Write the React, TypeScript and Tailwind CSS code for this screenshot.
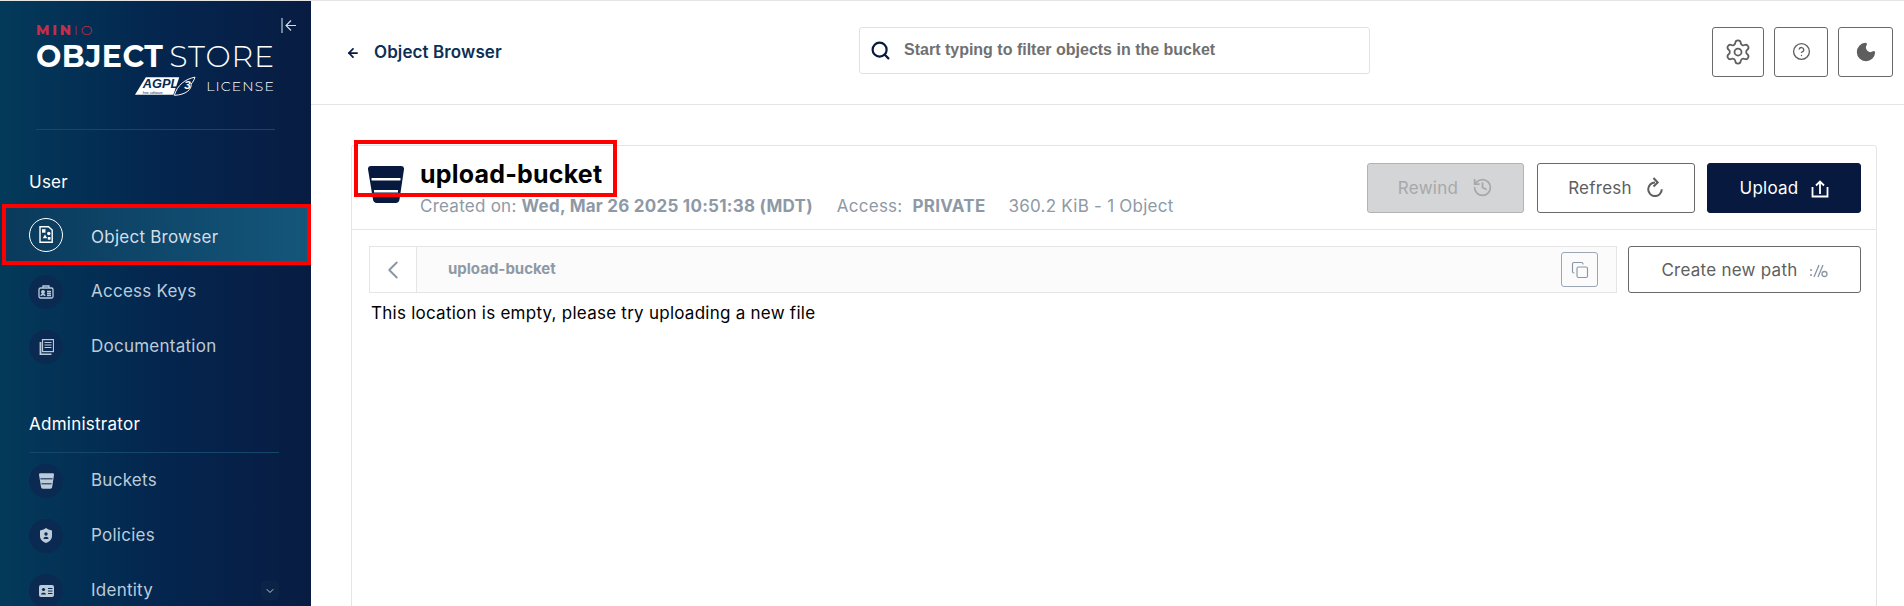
import { ArrowLeft, ChevronDown, ChevronLeft, CircleHelp, Copy, History, Moon, Search, Settings } from "lucide-react";
import type { ReactNode } from "react";

function BucketIcon({ className, line }: { className: string; line: string }) {
  return (
    <svg viewBox="0 0 36 37" className={className}>
      <path d="M3 0h30a3 3 0 0 1 3 3.300L31.500 33.500a4 4 0 0 1-4 3.500H9a4 4 0 0 1-4-3.500L0 3.300A3 3 0 0 1 3 0z" fill="currentColor" />
      <rect x="3.500" y="12" width="29" height="2.500" fill={line} />
      <rect x="6" y="24" width="24" height="2.500" fill={line} />
    </svg>
  );
}

function ObjectIcon() {
  return (
    <svg viewBox="0 0 14 17" className="w-[14px] h-[17px] text-white" fill="none" stroke="currentColor" strokeWidth="1.400">
      <path d="M1 .8h8.500L13.200 4v12.200H1z" />
      <rect x="3" y="3.200" width="3.500" height="3.500" fill="currentColor" stroke="none" />
      <circle cx="9.800" cy="7.500" r="1.700" fill="currentColor" stroke="none" />
      <path d="M6 8.500l2.300 3.800H3.700z" fill="currentColor" stroke="none" />
      <rect x="8.800" y="11" width="2.700" height="2.700" fill="currentColor" stroke="none" />
    </svg>
  );
}

function KeysIcon() {
  return (
    <svg viewBox="0 0 16 14" className="w-4 h-[14px]" fill="none" stroke="currentColor" strokeWidth="1.300">
      <rect x="1" y="3" width="14" height="10" rx="1.500" />
      <path d="M5 3V1h6v2" />
      <circle cx="5" cy="7" r="1.300" fill="currentColor" />
      <path d="M3 11c0-2 4-2 4 0M9 6.500h4M9 8.500h4M9 10.500h4" />
    </svg>
  );
}

function DocsIcon() {
  return (
    <svg viewBox="0 0 15 16" className="w-[15px] h-4" fill="none" stroke="currentColor" strokeWidth="1.200">
      <rect x="3.500" y="0.600" width="11" height="12" />
      <path d="M5.500 3.500h7M5.500 6h7M5.500 8.500h7" />
      <path d="M1.500 3v12.400h11" strokeWidth="1.800" />
    </svg>
  );
}

function PolicyIcon() {
  return (
    <svg viewBox="0 0 12 15" className="w-3 h-[15px]">
      <path d="M6 0l2.500 1.600L12 2.500V8c0 3.500-3 6-6 7-3-1-6-3.500-6-7V2.500l3.500-.9z" fill="currentColor" />
      <circle cx="6" cy="6" r="1.700" fill="#0a2a52" />
      <path d="M3.500 11c0-3 5-3 5 0z" fill="#0a2a52" />
    </svg>
  );
}

function IdentityIcon() {
  return (
    <svg viewBox="0 0 15 12" className="w-[15px] h-3">
      <rect width="15" height="12" rx="2" fill="currentColor" />
      <circle cx="4.500" cy="4.500" r="1.600" fill="#0a2a52" />
      <path d="M2 9.500c0-2.500 5-2.500 5 0z" fill="#0a2a52" />
      <path d="M9 3.500h4.500M9 6h4.500M9 8.500h4.500" stroke="#0a2a52" />
    </svg>
  );
}

function NavItem({ icon, label, active, chevron }: { icon: ReactNode; label: string; active?: boolean; chevron?: boolean }) {
  return (
    <div
      className={
        active
          ? "flex items-center h-[61px] pl-[23px] pr-[32px] ml-[2px] border-[4px] border-[#fe0000] bg-gradient-to-r from-[#0a3a5c] to-[#14567a] text-[#d4dde7]"
          : "flex items-center h-[55px] pl-[29px] pr-[32px] text-[#bccbd9]"
      }
    >
      <div
        className={
          active
            ? "w-[34px] h-[34px] rounded-full border border-white flex items-center justify-center shrink-0"
            : "w-[34px] h-[34px] rounded-full bg-[#0a2a52] flex items-center justify-center shrink-0"
        }
      >
        {icon}
      </div>
      <span className={active ? "ml-[28px] pt-[6px] text-[17px] tracking-[0.25px] flex-1" : "ml-[28px] text-[17px] tracking-[0.25px] flex-1"}>{label}</span>
      {chevron && (
        <div className="w-[18px] h-[19px] rounded-sm bg-[#0a2346] flex items-center justify-center">
          <ChevronDown size={12} />
        </div>
      )}
    </div>
  );
}

function Sidebar() {
  return (
    <aside className="relative w-[311px] shrink-0 h-full overflow-hidden bg-gradient-to-r from-[#033a5a] via-[#04264f] to-[#081c42]">
      <div className="px-[36px] pt-[24px] [font-family:Montserrat,Inter,sans-serif]">
        <div className="text-[#c72c48] text-[14px] leading-[11px] font-extrabold tracking-[0.2em]">
          MIN<span className="font-light">IO</span>
        </div>
        <div className="flex justify-between items-baseline mt-[6px] text-white text-[30px] leading-[30px]">
          <span className="font-bold tracking-[0.015em]">OBJECT</span>
          <span className="font-light tracking-[0.03em]">STORE</span>
        </div>
        <div className="flex justify-end items-center gap-[10px] mt-[4px]">
          <svg viewBox="0 0 62 20" className="w-[61px] h-5">
            <path d="M11 1h34L39 19H0z" fill="#fff" />
            <text x="8" y="12.500" fontSize="13" fontWeight="700" fontStyle="italic" fill="#0a2a52" fontFamily="Liberation Sans, sans-serif">AGPL</text>
            <text x="8" y="17.700" fontSize="3.500" fill="#0a2a52" fontFamily="Liberation Sans, sans-serif">free software</text>
            <path d="M40 19.500C43 9 51 3 61 1c-1 3-2 5-4 7 1 5-5 11-17 11.500z" fill="none" stroke="#fff" strokeWidth="1" />
            <text x="50" y="13.500" fontSize="12" fontWeight="700" fontStyle="italic" fill="#fff" fontFamily="Liberation Sans, sans-serif">3</text>
          </svg>
          <span className="text-[14px] leading-5 font-light tracking-[0.08em] text-white">LICENSE</span>
        </div>
      </div>
      <div className="absolute top-[17px] right-[14px] text-[#d6dee8]">
        <svg viewBox="0 0 16 15" className="w-4 h-[15px]" fill="none" stroke="currentColor" strokeWidth="1.100">
          <path d="M1 0v15" strokeWidth="1.600" stroke="#8fa0b5" />
          <path d="M15 7.500H5M10 2.500l-5 5 5 5" />
        </svg>
      </div>
      <div className="mx-[36px] mt-[33px] border-t border-[#14466e]" />
      <div className="pl-[29px] pt-[43px] pb-[12px] text-[17px] tracking-[0.25px] leading-[19px] text-white">User</div>
      <NavItem active icon={<ObjectIcon />} label="Object Browser" />
      <div className="-mt-[1px]">
        <NavItem icon={<KeysIcon />} label="Access Keys" />
        <NavItem icon={<DocsIcon />} label="Documentation" />
      </div>
      <div className="mt-[41px] ml-[29px] mr-[32px] pb-[18px] border-b border-[#14466e] text-[17px] tracking-[0.25px] leading-[19px] text-white">Administrator</div>
      <NavItem icon={<BucketIcon className="w-[15px] h-4" line="#0a2a52" />} label="Buckets" />
      <NavItem icon={<PolicyIcon />} label="Policies" />
      <NavItem icon={<IdentityIcon />} label="Identity" chevron />
    </aside>
  );
}

function Btn({ children, className }: { children: ReactNode; className: string }) {
  return <div className={`flex items-center justify-center rounded-[3px] border text-[17px] tracking-[0.25px] ${className}`}>{children}</div>;
}

function RefreshIcon() {
  return (
    <svg viewBox="0 0 18 20" className="w-[18px] h-5 -mt-[3px]" fill="none" stroke="currentColor" strokeWidth="2">
      <path d="M9 5.500a6.800 6.800 0 1 0 6.800 6.800" />
      <path d="M7.500 1l4.200 4.500L7.500 9.500" />
    </svg>
  );
}

function UploadIcon() {
  return (
    <svg viewBox="0 0 18 18" className="w-[18px] h-[18px]" fill="none" stroke="currentColor" strokeWidth="1.800">
      <path d="M1.500 7v9.500h15V7M9 14V2M5 5.500L9 1.500l4 4" />
    </svg>
  );
}

function PathIcon() {
  return (
    <svg viewBox="0 0 18 14" className="w-[18px] h-[14px] text-[#8a96a3]" fill="none" stroke="currentColor" strokeWidth="1.300">
      <circle cx="1" cy="6" r="1" fill="currentColor" stroke="none" />
      <circle cx="1" cy="11" r="1" fill="currentColor" stroke="none" />
      <path d="M4 13L9 1M8 13l5-12" />
      <circle cx="14.500" cy="10" r="2.500" />
    </svg>
  );
}

export default function App() {
  return (
    <div className="flex h-screen overflow-hidden bg-white border-t border-[#e5e5e5] [font-family:Inter,sans-serif]">
      <Sidebar />
      <main className="flex-1 min-w-0">
        <header className="flex items-center h-[104px] border-b border-[#e5e5e5] pl-[35px] pr-[11px]">
          <div className="flex items-center w-[513px] mt-[1px]">
            <ArrowLeft size={14} strokeWidth={3} className="text-[#07193e]" />
            <span className="ml-[14px] text-[17px] tracking-[0.1px] font-semibold text-[#0d2f54]">Object Browser</span>
          </div>
          <div className="flex items-center h-[47px] w-[511px] mb-[5px] border border-[#e2e2e2] rounded-[3px] pl-[10px]">
            <Search size={21} strokeWidth={2.500} className="text-[#07193e]" />
            <span className="ml-[13px] text-base font-bold text-[#707070] [font-family:'Liberation_Sans',sans-serif]">
              Start typing to filter objects in the bucket
            </span>
          </div>
          <div className="flex items-center gap-[10px] ml-auto mb-[2px]">
            <Btn className="w-[52px] h-[50px] border-[#696969] text-[#5e5e5e]"><Settings size={28} strokeWidth={1.500} /></Btn>
            <Btn className="w-[54px] h-[50px] border-[#696969] text-[#5e5e5e]"><CircleHelp size={19} strokeWidth={1.700} /></Btn>
            <Btn className="w-[55px] h-[50px] border-[#696969] text-[#5e5e5e]"><Moon size={22} fill="currentColor" /></Btn>
          </div>
        </header>

        <div className="relative pt-[40px] pl-[40px] pr-[27px]">
          {/* red annotation round the bucket name */}
          <div className="absolute left-[43px] top-[35px] w-[263px] h-[57px] border-[4px] border-[#fe0000]" />
          <div className="flex items-center h-[85px] border border-[#e5e5e5] rounded-t-[3px] pl-[16px] pr-[15px]">
            <BucketIcon className="w-9 h-[37px] mb-[6px] text-[#07193e] shrink-0" line="#ffffff" />
            <div className="ml-[16px] pb-[2px]">
              <h1 className="text-[25px] tracking-[0.2px] leading-[32px] mb-[6px] font-bold text-black">upload-bucket</h1>
              <div className="flex text-[17px] tracking-[0.25px] leading-[20px] text-[#8e99a6]">
                <span>Created on:&nbsp;<b className="font-bold">Wed, Mar 26 2025 10:51:38 (MDT)</b></span>
                <span className="ml-[24px]">Access:&nbsp; <b className="font-bold">PRIVATE</b></span>
                <span className="ml-[23px]">360.2 KiB - 1 Object</span>
              </div>
            </div>
            <div className="flex ml-auto">
              <Btn className="w-[157px] h-[50px] mr-[13px] pt-[2px] gap-[14px] bg-[#d3d5d6] border-[#b3b3b3] text-[#a6a9ab]">Rewind <History size={21} className="-mt-[3px]" /></Btn>
              <Btn className="w-[158px] h-[50px] mr-[12px] pt-[2px] gap-[14px] border-[#696969] text-[#5e5e5e]">Refresh <RefreshIcon /></Btn>
              <Btn className="w-[154px] h-[50px] pt-[2px] gap-[12px] bg-[#07193e] border-[#07193e] text-white">Upload <UploadIcon /></Btn>
            </div>
          </div>
          <div className="h-[400px] border-x border-[#e5e5e5] pt-[16px] pl-[17px] pr-[15px]">
            <div className="flex items-stretch gap-[11px]">
              <div className="flex items-center flex-1 h-[47px] bg-[#fbfbfb] border border-[#e5e5e5]">
                <div className="flex items-center justify-center w-[47px] h-full bg-white border-r border-[#e5e5e5] text-[#8a96a3]">
                  <ChevronLeft size={30} strokeWidth={1.500} />
                </div>
                <span className="ml-[31px] text-[15px] font-bold text-[#8e99a6]">upload-bucket</span>
                <div className="ml-auto mr-[18px] flex items-center justify-center w-[37px] h-[35px] rounded-[3px] border border-[#9aa6b3] text-[#8a96a3]">
                  <Copy size={18} strokeWidth={1.500} />
                </div>
              </div>
              <Btn className="w-[233px] h-[47px] pt-[2px] gap-[12px] border-[#696969] text-[#5e5e5e]">Create new path <PathIcon /></Btn>
            </div>
            <p className="mt-[8px] ml-[2px] text-[17px] tracking-[0.25px] leading-[24px] text-black">This location is empty, please try uploading a new file</p>
          </div>
        </div>
      </main>
    </div>
  );
}
